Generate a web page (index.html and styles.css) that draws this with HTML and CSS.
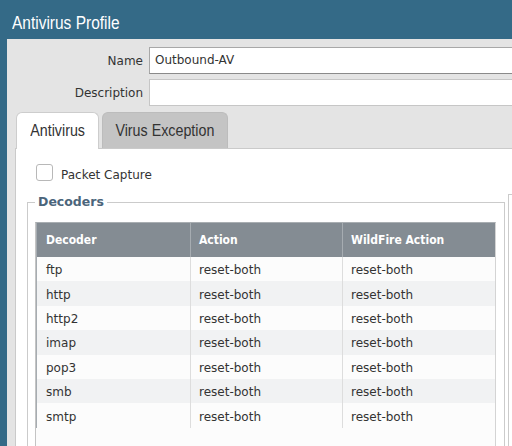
FILE: index.html
```html
<!DOCTYPE html>
<html>
<head>
<meta charset="utf-8">
<title>Antivirus Profile</title>
<link rel="stylesheet" href="styles.css">
</head>
<body>
<div class="dialog">
  <div class="titlebar"><span class="narrow title-text">Antivirus Profile</span></div>
  <div class="panel">
    <div class="form">
      <label class="lbl">Name</label>
      <div class="input focused">Outbound-AV</div>
      <label class="lbl">Description</label>
      <div class="input"></div>
    </div>
    <div class="tabs">
      <div class="tab active tab-av"><span class="narrow">Antivirus</span></div>
      <div class="tab tab-ex"><span class="narrow">Virus Exception</span></div>
    </div>
    <div class="tabpanel">
      <div class="check-row">
        <span class="checkbox"></span>
        <span class="check-label">Packet Capture</span>
      </div>
      <div class="groups">
        <fieldset class="group">
          <legend>Decoders</legend>
          <div class="grid">
            <table>
              <thead>
                <tr><th class="c1">Decoder</th><th class="c2">Action</th><th>WildFire Action</th></tr>
              </thead>
              <tbody>
                <tr><td>ftp</td><td>reset-both</td><td>reset-both</td></tr>
                <tr><td>http</td><td>reset-both</td><td>reset-both</td></tr>
                <tr><td>http2</td><td>reset-both</td><td>reset-both</td></tr>
                <tr><td>imap</td><td>reset-both</td><td>reset-both</td></tr>
                <tr><td>pop3</td><td>reset-both</td><td>reset-both</td></tr>
                <tr><td>smb</td><td>reset-both</td><td>reset-both</td></tr>
                <tr><td>smtp</td><td>reset-both</td><td>reset-both</td></tr>
              </tbody>
            </table>
          </div>
        </fieldset>
        <fieldset class="group second"></fieldset>
      </div>
    </div>
  </div>
</div>
</body>
</html>
```
FILE: styles.css
```css
html, body {
  margin: 0;
  height: 100%;
  overflow: hidden;
}
body {
  background: #346a87;
  font-family: "DejaVu Sans", "Noto Sans", sans-serif;
  font-size: 12px;
  color: #333;
}
.dialog {
  width: 580px;
}
.narrow {
  display: inline-block;
  white-space: nowrap;
  font-family: "Liberation Sans", Arial, sans-serif;
}
.titlebar {
  height: 26px;
  padding: 13px 0 0 12px;
  font-size: 18px;
  line-height: 20px;
  color: #fff;
}
.title-text {
  transform: scaleX(0.86);
  transform-origin: left center;
}
.panel {
  margin-left: 7px;
  background: #e4e4e4;
  height: 420px;
}
.form {
  display: grid;
  grid-template-columns: 136px 1fr;
  column-gap: 6px;
  row-gap: 5px;
  padding-top: 8px;
}
.lbl {
  text-align: right;
  align-self: center;
}
.input {
  height: 25px;
  line-height: 25px;
  padding-left: 5px;
  background: #fff;
  border: 1px solid #c6c6c6;
}
.input.focused {
  border-color: #a8a8a8;
  border-bottom-color: #8a8a8a;
}
.tabs {
  display: flex;
  align-items: flex-end;
  gap: 3px;
  margin-top: 6px;
  padding-left: 9px;
  height: 36px;
}
.tab {
  box-sizing: border-box;
  height: 36px;
  display: flex;
  align-items: center;
  justify-content: center;
  border: 1px solid #bcbcbc;
  border-bottom: 0;
  border-radius: 6px 6px 0 0;
  background: #c4c4c4;
  font-size: 17px;
  color: #333;
}
.tab .narrow {
  flex-shrink: 0;
  transform: scaleX(0.84);
  transform-origin: center;
}
.tab-av {
  width: 83px;
}
.tab-ex {
  width: 126px;
}
.tab.active {
  height: 37px;
  margin-bottom: -1px;
  background: #fff;
  border-color: #cdcdcd;
  z-index: 1;
}
.tabpanel {
  margin-left: 8px;
  height: 300px;
  background: #fff;
  border: 1px solid #cacaca;
  border-right: 0;
  padding: 15px 0 0 11px;
}
.check-row {
  display: flex;
  align-items: center;
  gap: 8px;
  margin-left: 9px;
  height: 17px;
}
.checkbox {
  width: 15px;
  height: 15px;
  border: 1px solid #b8b8b8;
  border-radius: 3px;
  background: #fff;
}
.check-label {
  margin-top: 5px;
}
.groups {
  display: flex;
  gap: 3px;
  margin-top: 13px;
}
.group {
  box-sizing: border-box;
  width: 478px;
  min-width: 0;
  height: 270px;
  margin: 0;
  padding: 12px 8px 0 7px;
  border: 1px solid #cbcbcb;
  border-bottom: 0;
}
.group legend {
  padding: 0 3px;
  font-size: 12.5px;
  font-weight: bold;
  line-height: 16px;
  color: #4b657b;
}
.group.second {
  flex: 1;
  width: auto;
}
.grid {
  height: 240px;
  background: #fcfcfc;
  border-left: 1px solid #c4c4c4;
  border-right: 1px solid #d4d4d4;
  border-top: 1px solid #a9aeb2;
}
.grid table {
  width: 100%;
  border-collapse: collapse;
}
.grid th {
  height: 34px;
  padding: 0 8px;
  background: #848c93;
  color: #fff;
  font-family: "DejaVu Sans Condensed", "DejaVu Sans", sans-serif;
  font-weight: bold;
  text-align: left;
  border-left: 1px solid #a6acb1;
}
.grid th.c1 {
  width: 136px;
  padding-left: 9px;
}
.grid th.c2 {
  width: 135px;
}
.grid td {
  height: 22.4px;
  padding: 2px 8px 0;
  border-left: 1px solid #dddddd;
}
.grid td:first-child {
  padding-left: 9px;
  border-left: 1px solid #a6acb1;
}
.grid tbody tr:nth-child(odd) {
  background: #fcfcfc;
}
.grid tbody tr:nth-child(even) {
  background: #f1f2f3;
}
```
